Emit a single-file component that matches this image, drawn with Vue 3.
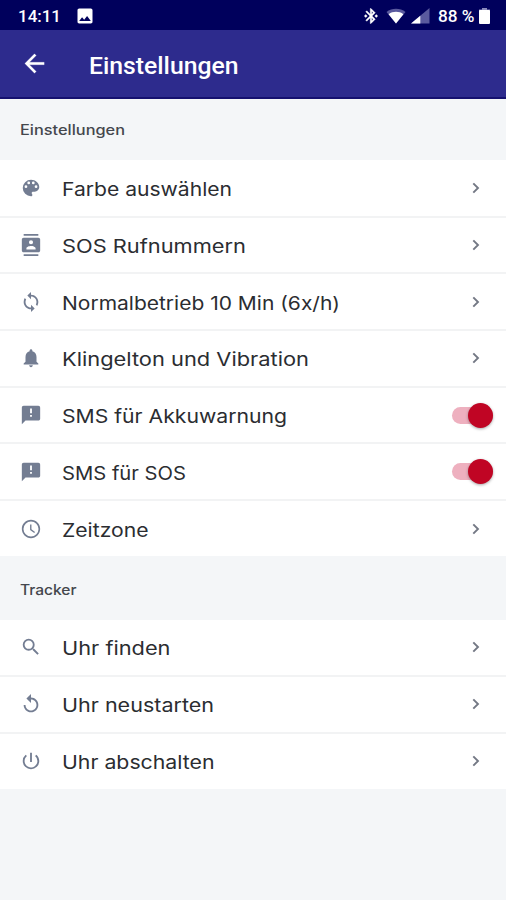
<script setup>
const P = {
  palette: 'M12 3a9 9 0 0 0 0 18c.83 0 1.5-.67 1.5-1.5 0-.39-.15-.74-.39-1.01-.23-.26-.38-.61-.38-.99 0-.83.67-1.5 1.5-1.5H16c2.76 0 5-2.24 5-5 0-4.42-4.03-8-9-8zm-5.500 9a1.500 1.500 0 1 1 0-3 1.500 1.500 0 0 1 0 3zm3-4a1.500 1.500 0 1 1 0-3 1.500 1.500 0 0 1 0 3zm5 0a1.500 1.500 0 1 1 0-3 1.500 1.500 0 0 1 0 3zm3 4a1.500 1.500 0 1 1 0-3 1.500 1.500 0 0 1 0 3z',
  contacts: 'M20 0H4v2h16V0zM4 24h16v-2H4v2zM20 4H4c-1.1 0-2 .9-2 2v12c0 1.1.9 2 2 2h16c1.1 0 2-.9 2-2V6c0-1.1-.9-2-2-2zm-8 2.75a2.25 2.25 0 1 1 0 4.5 2.25 2.25 0 0 1 0-4.5zM17 17H7v-1.5c0-1.67 3.33-2.5 5-2.5s5 .83 5 2.5V17z',
  sync: 'M12 4V1L8 5l4 4V6c3.31 0 6 2.69 6 6 0 1.01-.25 1.97-.7 2.8l1.46 1.46A7.93 7.93 0 0 0 20 12c0-4.42-3.58-8-8-8zm0 14c-3.31 0-6-2.69-6-6 0-1.01.25-1.97.7-2.8L5.24 7.74A7.93 7.93 0 0 0 4 12c0 4.42 3.58 8 8 8v3l4-4-4-4v3z',
  bell: 'M12 22c1.1 0 2-.9 2-2h-4c0 1.1.89 2 2 2zm6-6v-5c0-3.07-1.64-5.64-4.5-6.32V4c0-.83-.67-1.5-1.5-1.5s-1.5.67-1.5 1.5v.68C7.63 5.36 6 7.92 6 11v5l-2 2v1h16v-1l-2-2z',
  sms: 'M20 2H4c-1.1 0-2 .9-2 2v18l4-4h14c1.1 0 2-.9 2-2V4c0-1.1-.9-2-2-2zm-7 12h-2v-2h2v2zm0-4h-2V5h2v5z',
  clock: 'M11.99 2C6.47 2 2 6.48 2 12s4.47 10 9.99 10C17.52 22 22 17.52 22 12S17.52 2 11.99 2zM12 20.2a8.2 8.2 0 1 1 0-16.4 8.2 8.2 0 0 1 0 16.4zM12.5 7H11v6l4.5 3.4.9-1.2-3.9-2.9V7z',
  search: 'M15.5 14h-.79l-.28-.27A6.47 6.47 0 0 0 16 9.5 6.5 6.5 0 1 0 9.5 16c1.61 0 3.09-.59 4.23-1.57l.27.28v.79l5 4.99L20.49 19l-4.99-5zm-6 0a4.5 4.5 0 1 1 0-9 4.5 4.5 0 0 1 0 9z',
  replay: 'M12 5V1L7 6l5 5V7c3.31 0 6 2.69 6 6s-2.69 6-6 6-6-2.69-6-6H4c0 4.42 3.58 8 8 8s8-3.58 8-8-3.58-8-8-8z',
  power: 'M13 3h-2v10h2V3zm4.83 2.17-1.42 1.42A6.92 6.92 0 0 1 19 12a7 7 0 1 1-11.42-5.42L6.17 5.17A8.93 8.93 0 0 0 3 12a9 9 0 0 0 18 0c0-2.74-1.23-5.18-3.17-6.83z',
}
const sections = [
  {
    title: 'Einstellungen', width: 105,
    rows: [
      { icon: 'palette', label: 'Farbe auswählen', width: 170 },
      { icon: 'contacts', label: 'SOS Rufnummern', width: 184 },
      { icon: 'sync', label: 'Normalbetrieb 10 Min (6x/h)', width: 278 },
      { icon: 'bell', label: 'Klingelton und Vibration', width: 247 },
      { icon: 'sms', label: 'SMS für Akkuwarnung', width: 225, toggle: true },
      { icon: 'sms', label: 'SMS für SOS', width: 124, toggle: true },
      { icon: 'clock', label: 'Zeitzone', width: 86.5 },
    ],
  },
  {
    title: 'Tracker', width: 56.5,
    rows: [
      { icon: 'search', label: 'Uhr finden', width: 108.5 },
      { icon: 'replay', label: 'Uhr neustarten', width: 152 },
      { icon: 'power', label: 'Uhr abschalten', width: 152.5 },
    ],
  },
]
</script>

<template>
  <div class="screen">
    <div class="status">
      <svg class="time" width="44" height="20"><text x="0" y="16" textLength="43" lengthAdjust="spacingAndGlyphs">14:11</text></svg>
      <svg class="photo" width="20" height="20" viewBox="0 0 24 24"><path fill="#fff" d="M21 19V5c0-1.100-.9-2-2-2H5c-1.100 0-2 .9-2 2v14c0 1.100.9 2 2 2h14c1.100 0 2-.9 2-2zM8.500 13.500l2.500 3.010L14.500 12l4.500 6H5l3.500-4.500z" /></svg>
      <span class="spacer"></span>
      <svg class="bt" width="18" height="18" viewBox="0 0 24 24"><path fill="#fff" stroke="#fff" stroke-width=".5" d="M7 12l-2-2-2 2 2 2 2-2zm10.710-4.290L12 2h-1v7.590L6.410 5 5 6.410 10.590 12 5 17.590 6.410 19 11 14.410V22h1l5.710-5.710-4.300-4.290 4.300-4.290zM13 5.830l1.880 1.880L13 9.590V5.830zm1.880 10.460L13 18.170v-3.760l1.880 1.880zM19 10l-2 2 2 2 2-2-2-2z" /></svg>
      <svg class="wifi" width="20" height="16" viewBox="0 0 20 16"><path fill="#5a5a9e" d="M10 15.500.5 4C6-.3 14-.3 19.500 4z" /><path fill="#fff" d="M10 15.500 2.600 6.200C7 3 13 3 17.400 6.200z" /></svg>
      <svg class="signal" width="19" height="16" viewBox="0 0 19 16"><path fill="#5a5a9e" d="M18.500 0v15.500H0z" /><path fill="#fff" d="M9.300 7.800v7.700H0z" /></svg>
      <svg class="percent" width="37" height="20"><text x="0" y="16" textLength="36.500" lengthAdjust="spacingAndGlyphs">88 %</text></svg>
      <svg class="battery" width="11" height="16" viewBox="0 0 11 16"><path fill="#8a8abd" d="M3 0h5v1.500h3V4H0V1.500h3z" /><rect y="2" width="11" height="14" rx="1" fill="#fff" /></svg>
    </div>
    <header class="bar">
      <svg class="back" width="29" height="29" viewBox="0 0 24 24"><path fill="#fff" stroke="#fff" stroke-width=".2" d="M20 11H7.830l5.590-5.590L12 4l-8 8 8 8 1.410-1.410L7.830 13H20v-2z" /></svg>
      <svg class="title" width="160" height="34"><text x="0" y="27" textLength="149.500" lengthAdjust="spacingAndGlyphs">Einstellungen</text></svg>
    </header>
    <section v-for="s in sections" :key="s.title">
      <h2 class="heading">
        <svg width="120" height="20"><text x="0" y="15" :textLength="s.width" lengthAdjust="spacingAndGlyphs">{{ s.title }}</text></svg>
      </h2>
      <ul class="list">
        <li v-for="r in s.rows" :key="r.label" class="row">
          <svg class="icon" :class="r.icon" viewBox="0 0 24 24"><path :d="P[r.icon]" /></svg>
          <svg class="label" width="300" height="28"><text x="0" y="22" :textLength="r.width" lengthAdjust="spacingAndGlyphs">{{ r.label }}</text></svg>
          <span v-if="r.toggle" class="toggle"><span class="knob"></span></span>
          <svg v-else class="chevron" width="8" height="12" viewBox="0 0 8 12"><path d="M1.300 1.300 6 6l-4.700 4.700" /></svg>
        </li>
      </ul>
    </section>
  </div>
</template>

<style>
body { background: #f4f6f8; }
</style>

<style scoped>
.screen { width: 506px; height: 900px; overflow: hidden; background: #f4f6f8; font-family: Inter, "Noto Sans", sans-serif; }
svg { display: block; flex: none; overflow: visible; }
.status { display: flex; align-items: center; box-sizing: border-box; height: 30px; padding: 1px 16px 0 18px; background: #00005c; }
.status text { font: 500 17px Roboto, sans-serif; fill: #fff; }
.photo { margin-left: 13px; }
.spacer { flex: 1; }
.wifi { margin-left: 6px; }
.signal { margin-left: 5px; }
.percent { margin-left: 8px; }
.battery { margin-left: 4px; }
.bar { display: flex; align-items: center; box-sizing: border-box; height: 69px; padding: 0 20px; background: #2d2b8d; border-bottom: 2px solid #15116f; }
.title { margin-left: 40px; }
.title text { font: 500 23.500px Roboto, sans-serif; fill: #fff; }
.heading { display: flex; align-items: center; box-sizing: border-box; height: 61px; margin: 0; padding: 1px 20px 0; }
.heading text { font-size: 13.800px; font-weight: 500; fill: #44474d; }
section + section .heading { height: 64px; padding-top: 3px; }
.list { margin: 0; padding: 0; list-style: none; }
.row { display: flex; align-items: center; box-sizing: border-box; height: 56.700px; padding: 0 26px 0 20px; background: #fff; border-bottom: 2px solid #f2f3f4; }
section:first-of-type .row:first-child { height: 57.700px; padding-top: 1px; }
.row:last-child { height: 55px; border-bottom: 0; }
.icon { width: 22px; height: 22px; fill: #737d92; }
.label { margin-left: 20px; }
.label text { font-size: 18.500px; fill: #2b2d31; }
.chevron { margin-left: auto; fill: none; stroke: #737884; stroke-width: 1.900; }
.toggle { display: flex; align-items: center; justify-content: flex-end; width: 41px; height: 17px; margin: 0 -13px 0 auto; border-radius: 9px; background: #eeb0bf; }
.knob { width: 25px; height: 25px; border-radius: 50%; background: #c00524; box-shadow: 0 1px 3px rgba(0, 0, 0, .35); flex: none; }
</style>
